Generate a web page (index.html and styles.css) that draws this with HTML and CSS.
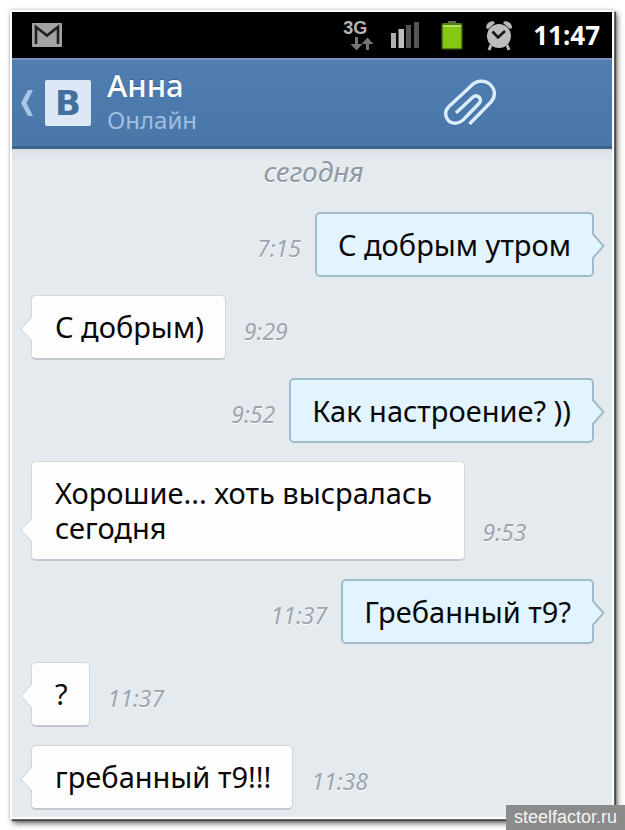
FILE: index.html
```html
<!DOCTYPE html>
<html lang="ru">
<head>
<meta charset="utf-8">
<meta name="viewport" content="width=device-width, initial-scale=1">
<title>Анна</title>
<link rel="stylesheet" href="styles.css">
</head>
<body>
<div class="phone">
  <div class="status">
    <svg class="mail" width="30" height="24" viewBox="0 0 30 24" aria-hidden="true">
      <rect width="30" height="24" rx="1" fill="#a3a3a3"/>
      <path d="M4 21V4L15 12.500 26 4V21" fill="none" stroke="#202020" stroke-width="2.600"/>
    </svg>
    <div class="tray">
      <div class="network">
        <span class="network-type">3G</span>
        <svg class="arrows" width="24" height="14" viewBox="0 0 24 14" aria-hidden="true">
          <path d="M6.500 0V9M17.500 13V5" fill="none" stroke="#747474" stroke-width="3"/>
          <path d="M0.500 7H12.500L6.500 13.500zM11.500 7H23.500L17.500 0.500z" fill="#747474"/>
        </svg>
      </div>
      <svg class="signal" width="30" height="28" viewBox="0 0 30 28" aria-hidden="true">
        <path d="M1 12h5v15H1z" fill="#b0b0b0"/>
        <path d="M8.500 8h5.500v19H8.500z" fill="#bdbdbd"/>
        <path d="M16 4h5v23h-5zM24 1h5v26h-5z" fill="#555"/>
      </svg>
      <svg class="battery" width="22" height="30" viewBox="0 0 22 30" aria-hidden="true">
        <path d="M7 4V1h8v3z" fill="#5c6b50"/>
        <rect x="0.500" y="3" width="21" height="26.500" rx="2" fill="#4d7d12"/>
        <rect x="2" y="5" width="18" height="23" rx="1" fill="#86c713"/>
        <path d="M2 5h18v2H2z" fill="#b5df62"/>
      </svg>
      <svg class="alarm" width="28" height="31" viewBox="0 0 28 31" aria-hidden="true">
        <path d="M1 8Q1 2 8 1L10 3 3 9zM27 8Q27 2 20 1L18 3 25 9z" fill="#b8b8b8"/>
        <path d="M6 25 4 30M22 25 24 30" stroke="#b8b8b8" stroke-width="3"/>
        <circle cx="14" cy="16" r="12" fill="#bdbdbd"/>
        <path d="M7.500 11.500 13 17.500 20 11" fill="none" stroke="#161616" stroke-width="2.600"/>
      </svg>
      <time class="clock">11:47</time>
    </div>
  </div>

  <header class="bar">
    <button class="back" type="button" aria-label="Назад">
      <svg width="14" height="28" viewBox="0 0 14 28" aria-hidden="true">
        <path d="M8 1h5L6.500 14 13 27H8L1 14z" fill="#a9c6e6"/>
      </svg>
      <span class="logo">В</span>
    </button>
    <div class="who">
      <h1 class="name">Анна</h1>
      <p class="state">Онлайн</p>
    </div>
    <button class="attach" type="button" aria-label="Прикрепить">
      <svg width="54" height="48" viewBox="0 0 54 48" aria-hidden="true">
        <path d="M13 34 29.500 18.500C34 14.500 40 19.500 36 24.500L22.500 38.500C16 46.500 7 45.500 4 39.500C1.500 35 2.500 31 6 27.500L28 7C33 1.500 41 .5 46.500 5C53 10.500 52.500 18 48 23L26.500 45" fill="none" stroke="#3c6594" stroke-width="3.500" transform="translate(0 1.500)" opacity=".5"/>
        <path d="M13 34 29.500 18.500C34 14.500 40 19.500 36 24.500L22.500 38.500C16 46.500 7 45.500 4 39.500C1.500 35 2.500 31 6 27.500L28 7C33 1.500 41 .5 46.500 5C53 10.500 52.500 18 48 23L26.500 45" fill="none" stroke="#d9ecfc" stroke-width="3.500"/>
      </svg>
    </button>
  </header>

  <main class="chat">
    <h2 class="day">сегодня</h2>
    <ol class="messages">
      <li class="row out">
        <p class="bubble">С добрым утром<svg class="tail" width="13" height="28" viewBox="0 0 13 28" aria-hidden="true"><path class="fill" d="M0 1 11 14 0 27z"/><path class="edge" d="M1 1V2L11.500 14 1 26V27"/></svg></p>
        <time class="time">7:15</time>
      </li>
      <li class="row in">
        <p class="bubble">С добрым)<svg class="tail" width="13" height="28" viewBox="0 0 13 28" aria-hidden="true"><path class="fill" d="M13 1 1 14 13 27z"/><path class="edge" d="M12 2 1 14 12 26"/></svg></p>
        <time class="time">9:29</time>
      </li>
      <li class="row out">
        <p class="bubble">Как настроение? ))<svg class="tail" width="13" height="28" viewBox="0 0 13 28" aria-hidden="true"><path class="fill" d="M0 1 11 14 0 27z"/><path class="edge" d="M1 1V2L11.500 14 1 26V27"/></svg></p>
        <time class="time">9:52</time>
      </li>
      <li class="row in">
        <p class="bubble">Хорошие... хоть высралась сегодня<svg class="tail" width="13" height="28" viewBox="0 0 13 28" aria-hidden="true"><path class="fill" d="M13 1 1 14 13 27z"/><path class="edge" d="M12 2 1 14 12 26"/></svg></p>
        <time class="time">9:53</time>
      </li>
      <li class="row out">
        <p class="bubble">Гребанный т9?<svg class="tail" width="13" height="28" viewBox="0 0 13 28" aria-hidden="true"><path class="fill" d="M0 1 11 14 0 27z"/><path class="edge" d="M1 1V2L11.500 14 1 26V27"/></svg></p>
        <time class="time">11:37</time>
      </li>
      <li class="row in">
        <p class="bubble">?<svg class="tail" width="13" height="28" viewBox="0 0 13 28" aria-hidden="true"><path class="fill" d="M13 1 1 14 13 27z"/><path class="edge" d="M12 2 1 14 12 26"/></svg></p>
        <time class="time">11:37</time>
      </li>
      <li class="row in">
        <p class="bubble">гребанный т9!!!<svg class="tail" width="13" height="28" viewBox="0 0 13 28" aria-hidden="true"><path class="fill" d="M13 1 1 14 13 27z"/><path class="edge" d="M12 2 1 14 12 26"/></svg></p>
        <time class="time">11:38</time>
      </li>
    </ol>
  </main>
</div>
<div class="source">steelfactor.ru</div>
</body>
</html>
```

FILE: styles.css
```css
* {
  box-sizing: border-box;
}

body {
  margin: 0;
  padding: 10px 11px 11px 10px;
  background: #fff;
  font-family: "Noto Sans", "Open Sans", sans-serif;
}

h1, h2, p, ol {
  margin: 0;
  padding: 0;
  font-weight: 400;
}

button {
  padding: 0;
  border: 0;
  background: none;
  font: inherit;
}

svg {
  display: block;
}

.phone {
  border: 2px solid #fff;
  box-shadow: 0 0 3px #bbb, 2px 2px 1px #333, 3px 4px 6px #555;
}

.status {
  display: flex;
  align-items: center;
  justify-content: space-between;
  height: 46px;
  padding: 0 12px 0 20px;
  background: #000;
}

.tray {
  display: flex;
  align-items: center;
}

.network {
  display: flex;
  flex-direction: column;
  width: 31px;
  margin-right: 16px;
}

.network-type {
  color: #b4b4b4;
  font: 700 18px/18px "Liberation Sans", sans-serif;
}

.arrows {
  align-self: flex-end;
}

.signal {
  margin-right: 21px;
}

.battery {
  margin-right: 22px;
}

.alarm {
  margin-right: 20px;
}

.clock {
  color: #fff;
  font-size: 26px;
  font-weight: 700;
  line-height: 46px;
}

.bar {
  display: flex;
  align-items: center;
  height: 91px;
  padding: 0 115px 0 8px;
  border-top: 2px solid #7595bd;
  border-bottom: 3px solid #3d648f;
  background: linear-gradient(#507eb0, #4a76a8);
}

.back {
  display: flex;
  align-items: center;
  gap: 11px;
}

.logo {
  width: 46px;
  border-radius: 2px;
  background: #dce8f6;
  color: #456f9f;
  font: 700 34px/46px "DejaVu Sans", sans-serif;
}

.who {
  flex: 1;
  margin-left: 16px;
}

.name {
  color: #fff;
  font-size: 31px;
  font-weight: 500;
  line-height: 34px;
  text-shadow: 0 -1px 1px #365f8e;
}

.state {
  color: #9fbfe2;
  font-size: 24px;
  line-height: 36px;
}

.chat {
  padding: 4px 18px 7px 19px;
  background: linear-gradient(#d9dfe6, #e5eaee 12px);
}

.day {
  margin-bottom: 23px;
  padding-left: 2px;
  color: #8f99a5;
  font-size: 28px;
  font-style: italic;
  line-height: 36px;
  text-align: center;
  text-shadow: 0 1px #fff;
}

.messages {
  display: flex;
  flex-direction: column;
  gap: 18px;
  list-style: none;
}

.row {
  display: flex;
  align-items: flex-end;
  gap: 18px;
}

.out {
  flex-direction: row-reverse;
  gap: 14px;
}

.bubble {
  position: relative;
  max-width: 77%;
  padding: 13px 21px 14px 23px;
  border: 1px solid #d0d6dc;
  border-bottom: 2px solid #c3c9d0;
  border-radius: 5px;
  background: #fdfdfd;
  color: #080808;
  font-size: 29px;
  line-height: 35px;
}

.out .bubble {
  padding: 13px 21px;
  border: 2px solid #a0bccb;
  background: #e2f4ff;
}

.tail {
  position: absolute;
  bottom: 15px;
  left: -12px;
}

.out .tail {
  right: -13px;
  left: auto;
}

.fill {
  fill: #fdfdfd;
}

.edge {
  fill: none;
  stroke: #c9d0d7;
  stroke-width: 1;
}

.out .fill {
  fill: #e2f4ff;
}

.out .edge {
  stroke: #a0bccb;
  stroke-width: 2;
}

.time {
  color: #9ca4b0;
  font-size: 23px;
  font-style: italic;
  line-height: 58px;
  text-shadow: 0 1px #fff;
}

.source {
  position: absolute;
  right: 0;
  bottom: 0;
  padding: 0 8px;
  background: #8b8b8b;
  color: #f4f4f4;
  font: 18px/25px "Liberation Sans", sans-serif;
}
```
